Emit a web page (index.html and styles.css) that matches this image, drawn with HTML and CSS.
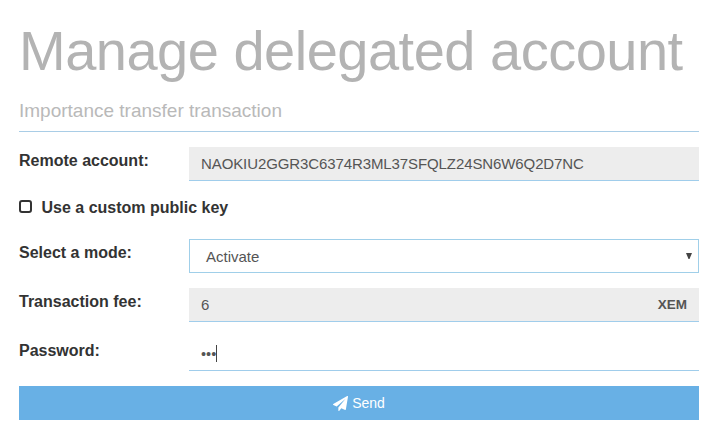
FILE: index.html
```html
<!DOCTYPE html>
<html lang="en">
<head>
<meta charset="utf-8">
<title>Manage delegated account</title>
<link rel="stylesheet" href="styles.css">
</head>
<body>
<main class="panel">
  <h1 class="title">Manage delegated account</h1>
  <h2 class="subtitle">Importance transfer transaction</h2>
  <form class="form">
    <div class="row">
      <span class="label">Remote account:</span>
      <div class="field field-muted field-address">NAOKIU2GGR3C6374R3ML37SFQLZ24SN6W6Q2D7NC</div>
    </div>
    <div class="check-row">
      <span class="checkbox"></span>
      <span class="check-label">Use a custom public key</span>
    </div>
    <div class="row">
      <span class="label">Select a mode:</span>
      <div class="field field-select"><span>Activate</span><svg class="arrow" viewBox="0 0 6 6"><path d="M0 0H6L3.500 6H2.500Z"/></svg></div>
    </div>
    <div class="row">
      <span class="label">Transaction fee:</span>
      <div class="field field-muted field-fee"><span>6</span><span class="unit">XEM</span></div>
    </div>
    <div class="row">
      <span class="label">Password:</span>
      <div class="field field-password"><span class="dots">•••</span><span class="caret"></span></div>
    </div>
    <button class="send" type="button">
      <svg class="plane" viewBox="0 0 1792 1792"><path d="M1764 11q33 24 27 64l-256 1536q-5 29-32 45-14 8-31 8-11 0-24-5l-453-185-242 295q-18 23-49 23-13 0-22-4-19-7-30.500-23.500t-11.500-36.500v-349l864-1059-1069 925-395-162q-37-14-40-55-2-40 32-59l1664-960q15-9 32-9 20 0 36 11z"/></svg>
      <span>Send</span>
    </button>
  </form>
</main>
</body>
</html>
```
FILE: styles.css
```css
* { box-sizing: border-box; }
body { margin: 0; background: #fff; color: #333; font-family: "Liberation Sans", Arial, sans-serif; font-size: 16px; }
.panel { padding: 20px 19px 0; }
.title { margin: 0; height: 64px; font-size: 56px; line-height: 62px; font-weight: 400; letter-spacing: -0.5px; color: #b3b3b3; white-space: nowrap; }
.subtitle { margin: 0; padding-top: 14px; height: 48px; border-bottom: 1px solid #a9cde6; font-size: 19px; line-height: 26px; font-weight: 400; color: #b9b9b9; }
.form { padding-top: 15px; }
.row { display: flex; height: 34px; margin-bottom: 15px; }
.label { width: 170px; flex: none; font-weight: 700; line-height: 27px; }
.field { flex: 1; display: flex; align-items: center; padding: 0 12px; border-bottom: 1px solid #a0cdeb; font-size: 15px; color: #555; }
.field-muted { background: #ededed; }
.field-address { letter-spacing: -0.1px; }
.field-select { justify-content: space-between; padding: 1px 6px 0 16px; border: 1px solid #a0cfe9; }
.arrow { width: 6px; height: 6px; margin-bottom: 2px; fill: #444; }
.field-fee { justify-content: space-between; }
.field-password { font-size: 14.500px; }
.unit { font-size: 13.500px; font-weight: 700; }
.check-row { display: flex; align-items: center; height: 24px; margin-bottom: 19px; }
.checkbox { width: 13px; height: 13px; margin: 0 9.500px 3px 0; border: 2px solid #333; border-radius: 3px; }
.check-label { font-weight: 700; }
.caret { width: 1px; height: 17px; background: #444; }
.send { display: flex; align-items: center; justify-content: center; gap: 4px; width: 100%; height: 34px; border: 0; background: #68b0e5; color: #fff; font: 14px "Liberation Sans", Arial, sans-serif; }
.plane { width: 15px; height: 15px; fill: #fff; }
```
